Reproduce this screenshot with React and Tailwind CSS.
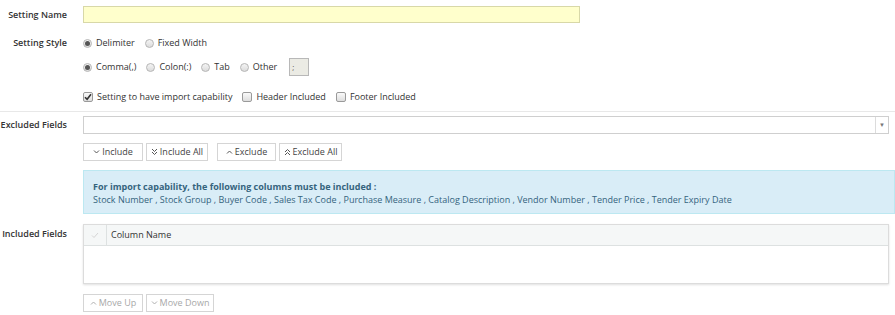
import React from "react";

const font = { fontFamily: '"Open Sans", "Noto Sans", sans-serif' };

function Radio({ checked, label }) {
  return (
    <label className="flex items-center gap-[4px] mr-[10px] whitespace-nowrap">
      <span className="w-[9px] h-[9px] rounded-full border border-[#b5b5b5] bg-gradient-to-b from-[#f4f4f4] to-[#dcdcdc] flex items-center justify-center">
        {checked && <span className="w-[5px] h-[5px] rounded-full bg-[#555]" />}
      </span>
      <span>{label}</span>
    </label>
  );
}

function Check({ checked, label }) {
  return (
    <label className="flex items-center gap-[4px] mr-[10px] whitespace-nowrap">
      <span className="w-[10px] h-[10px] rounded-[2px] border border-[#9a9a9a] bg-gradient-to-b from-[#fafafa] to-[#dedede] flex items-center justify-center">
        {checked && (
          <svg width="8" height="8" viewBox="0 0 8 8">
            <path d="M1 4.2 L3.1 6.3 L7 1.2" stroke="#333" strokeWidth="1.6" fill="none" />
          </svg>
        )}
      </span>
      <span>{label}</span>
    </label>
  );
}

function Chev({ dir, dbl, color }) {
  const up = dir === "up";
  const one = (y) => (up ? `M1 ${y + 3} L3.5 ${y + 0.5} L6 ${y + 3}` : `M1 ${y} L3.5 ${y + 2.5} L6 ${y}`);
  return (
    <svg width="7" height="8" viewBox="0 0 7 8">
      {dbl ? (
        <>
          <path d={one(1)} stroke={color} strokeWidth="1" fill="none" />
          <path d={one(4)} stroke={color} strokeWidth="1" fill="none" />
        </>
      ) : (
        <path d={one(2.5)} stroke={color} strokeWidth="1" fill="none" />
      )}
    </svg>
  );
}

function Btn({ dir, dbl, children, w, disabled }) {
  const color = disabled ? "#b0b0b0" : "#555";
  return (
    <button
      className={`h-[18px] border border-[#d5d5d5] bg-white flex items-center justify-center gap-[2px] whitespace-nowrap ${w} ${disabled ? "text-[#a8a8a8]" : "text-[#444]"}`}
    >
      <Chev dir={dir} dbl={dbl} color={color} />
      <span>{children}</span>
    </button>
  );
}

export default function App() {
  return (
    <div className="w-[895px] h-[315px] bg-white text-[9px] text-[#333] overflow-hidden" style={font}>
      {/* Setting name */}
      <div className="flex items-center pt-[6px] h-[23px]">
        <div className="w-[67px] text-right font-semibold whitespace-nowrap">Setting Name</div>
        <div className="ml-[16px] w-[497px] h-[17px] bg-[#ffffcc] border border-[#d8d8a8]" />
      </div>
      {/* Setting Style */}
      <div className="flex items-center mt-[12px] h-[16px]">
        <div className="w-[67px] text-right font-semibold whitespace-nowrap">Setting Style</div>
        <div className="ml-[16px] flex items-center h-[16px]">
          <Radio checked label="Delimiter" />
          <Radio label="Fixed Width" />
        </div>
      </div>
      <div className="flex items-center mt-[7px] ml-[83px] h-[18px]">
        <Radio checked label="Comma(,)" />
        <Radio label="Colon(:)" />
        <Radio label="Tab" />
        <Radio label="Other" />
        <div className="ml-[2px] w-[20px] h-[18px] bg-[#ebebe4] border border-[#b8b8b8] flex items-center pl-[2px] text-[8px] text-[#555]">;</div>
      </div>
      <div className="flex items-center mt-[13px] ml-[83px] h-[16px]">
        <Check checked label="Setting to have import capability" />
        <Check label="Header Included" />
        <Check label="Footer Included" />
      </div>
      <div className="mt-[6px] h-px bg-[#e8e8e8]" />
      {/* Excluded */}
      <div className="flex items-center mt-[4px] h-[18px]">
        <div className="w-[67px] text-right font-semibold whitespace-nowrap">Excluded Fields</div>
        <div className="ml-[16px] w-[806px] h-[18px] border border-[#cfcfcf] bg-white flex justify-end">
          <div className="w-[13px] border-l border-[#dcdcdc] flex items-center justify-center text-[6px] text-[#777]">▼</div>
        </div>
      </div>
      <div className="flex items-center mt-[9px] ml-[83px] h-[18px]">
        <Btn dir="down" w="w-[60px]">Include</Btn>
        <div className="w-[3px]" />
        <Btn dir="down" dbl w="w-[62px]">Include All</Btn>
        <div className="w-[9px]" />
        <Btn dir="up" w="w-[59px]">Exclude</Btn>
        <div className="w-[3px]" />
        <Btn dir="up" dbl w="w-[63px]">Exclude All</Btn>
      </div>
      <div className="ml-[83px] mt-[9px] h-[44px] bg-[#d9edf7] border border-[#bce8f1] pl-[9px] pt-[9px] text-[#35647e] leading-[13px]">
        <div className="font-bold whitespace-nowrap">For import capability, the following columns must be included :</div>
        <div className="whitespace-nowrap">Stock Number , Stock Group , Buyer Code , Sales Tax Code , Purchase Measure , Catalog Description , Vendor Number , Tender Price , Tender Expiry Date</div>
      </div>
      {/* Included */}
      <div className="flex items-start mt-[10px]">
        <div className="w-[67px] text-right font-semibold pt-[3px] whitespace-nowrap">Included Fields</div>
        <div className="ml-[16px] w-[806px] h-[60px] border border-[#dcdcdc] shadow-[0_1px_2px_rgba(0,0,0,0.12)] bg-white">
          <div className="h-[21px] bg-[#f5f7f7] border-b border-[#dde1e1] flex items-center">
            <div className="w-[23px] h-full border-r border-[#dde1e1] flex items-center justify-center">
              <svg width="8" height="7" viewBox="0 0 8 7">
                <path d="M1 3.5 L3 5.5 L7 1" stroke="#d5d5d5" strokeWidth="1" fill="none" />
              </svg>
            </div>
            <div className="pl-[4px] text-[#333]">Column Name</div>
          </div>
        </div>
      </div>
      <div className="flex items-center mt-[10px] ml-[83px] h-[18px]">
        <Btn dir="up" w="w-[60px]" disabled>Move Up</Btn>
        <div className="w-[3px]" />
        <Btn dir="down" w="w-[68px]" disabled>Move Down</Btn>
      </div>
    </div>
  );
}
